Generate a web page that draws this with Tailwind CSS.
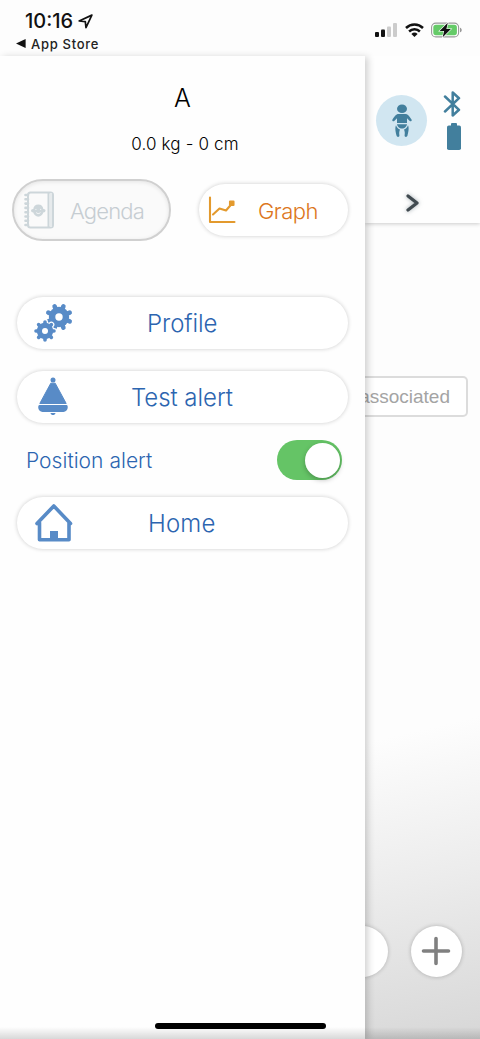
<!DOCTYPE html>
<html lang="en">
<head>
<meta charset="utf-8">
<meta name="viewport" content="width=device-width, initial-scale=1">
<title>Menu</title>
<script src="https://cdn.jsdelivr.net/npm/@tailwindcss/browser@4"></script>
</head>
<body class="bg-[#fdfdfd] font-['Inter','Liberation_Sans',sans-serif]">
<div class="relative flex h-[1039px] w-[480px] flex-col overflow-hidden bg-[#fdfdfd]">

  <!-- status bar -->
  <header class="flex h-14 shrink-0 justify-between">
    <div class="flex flex-col pl-4 pt-[9px]">
      <div class="flex h-6 items-center gap-[5px] pl-[9px]">
        <span class="text-[20px] leading-6 font-medium tracking-[0px] text-[#111]">10:16</span>
        <svg class="h-[15px] w-[15px]" viewBox="0 0 16 16" fill="none" stroke="#111" stroke-width="1.8" stroke-linejoin="round"><path d="M14.800 1.200 1.200 7.400l6.600.8.700 6.300z"/></svg>
      </div>
      <div class="flex h-5 items-center gap-[5px] pt-px">
        <svg class="h-[9px] w-[10px]" viewBox="0 0 10 9" fill="#111"><path d="M0 4.500 9.600 0v9z"/></svg>
        <span class="text-[13px] leading-5 font-medium tracking-[0.700px] text-[#222]">App Store</span>
      </div>
    </div>
    <div class="mt-[21px] flex h-[18px] items-center gap-[6px] pr-[18px]">
      <svg class="-ml-1 mr-[2px] h-[14px] w-[22px]" viewBox="0 0 22 14"><rect x="0" y="9" width="4" height="5" rx="1" fill="#111"/><rect x="6" y="6.500" width="4" height="7.500" rx="1" fill="#111"/><rect x="12" y="3.500" width="4" height="10.500" rx="1" fill="#ccc"/><rect x="18" y="0" width="4" height="14" rx="1" fill="#ccc"/></svg>
      <svg class="mr-[1px] h-[14px] w-[19px]" viewBox="0 0 19 14" fill="none" stroke="#111" stroke-width="2.500"><path d="M1 5a12.200 12.200 0 0 1 17 0M4.100 8.500a7.800 7.800 0 0 1 10.800 0"/><path d="M9.500 14 6.400 11a4.500 4.500 0 0 1 6.200 0z" fill="#111" stroke="none"/></svg>
      <svg class="h-4 w-[31px]" viewBox="0 0 31 16"><rect x=".6" y="1.100" width="27" height="13.800" rx="4.200" fill="#fff" stroke="#999" stroke-width="1.100"/><rect x="2.300" y="2.800" width="23.600" height="10.400" rx="2.600" fill="#65cb68"/><path d="M29 5.700c2.300.6 2.300 4 0 4.600z" fill="#999"/><path d="M16.800.7 8.600 9h4.500l-1.400 6.300L19.900 7h-4.500z" fill="#111" stroke="#fff" stroke-width="1.200" paint-order="stroke"/></svg>
    </div>
  </header>

  <div class="flex h-[983px]">
    <!-- side drawer -->
    <aside class="relative z-10 flex w-[365px] shrink-0 flex-col bg-[#fefefe] shadow-[3px_1px_7px_rgba(0,0,0,0.18)]">
      <h1 class="mt-[27px] text-center text-[25px] leading-[30px] font-light text-black">A</h1>
      <p class="mt-[21px] pl-[5px] text-center text-[17px] leading-5 font-light tracking-[0.150px] text-black">0.0 kg - 0 cm</p>

      <div class="mt-[25px] flex h-[62px] items-center pl-3">
        <button class="flex h-[62px] w-[159px] items-center rounded-full border-2 border-[#d0d0d0] bg-[#fafafa] pl-[10px] shadow-[inset_0_1px_4px_rgba(0,0,0,0.09)]">
          <svg class="h-[38px] w-[31px]" viewBox="0 0 31 38" fill="none" stroke="#cdd6da" stroke-width="2"><rect x="4" y="1.500" width="25" height="35" rx="2.500"/><path d="M24.500 2v34"/><path d="M27 2v34" stroke="#e6eaec"/><path d="M1.500 4H4M1.500 8.300H4M1.500 12.600H4M1.500 16.900H4M1.500 21.200H4M1.500 25.500H4M1.500 29.800H4M1.500 34H4" stroke-width="2.600" stroke-linecap="round"/><path d="M14.300 13.500c-3 0-4.800 2-5 4.500-3-.2-3 3.400 0 3.500.4 2 2.500 4.200 5 4.200s4.600-2.200 5-4.200c3-.1 3-3.700 0-3.500-.2-2.500-2-4.500-5-4.500z" fill="#cdd6da" stroke="none"/><path d="M11.400 18.400h1M16.200 18.400h1M12.200 21.600c1.300 1.300 2.900 1.300 4.200 0" stroke="#fafafa" stroke-width=".9"/></svg>
          <span class="ml-[15px] pt-px text-[22px] leading-7 font-light tracking-[-0.850px] text-[#c6cdd2]">Agenda</span>
        </button>
        <button class="ml-7 flex h-[52px] w-[149px] items-center rounded-full bg-white pl-[9px] shadow-[0_0_4px_rgba(0,0,0,0.2)]">
          <svg class="h-7 w-7" viewBox="0 0 28 28" fill="none" stroke="#e39a2e" stroke-width="2.100" stroke-linecap="round" stroke-linejoin="round"><path d="M2 1.500v24.500h24.500"/><path d="m5 18.500 6.500-6 6.500 2 6-7"/><path d="M22 5.500h3.500V9H22z" fill="#e39a2e"/></svg>
          <span class="ml-[22px] pt-px text-[22px] leading-7 font-light tracking-[-0.550px] text-[#dc7620]">Graph</span>
        </button>
      </div>

      <nav class="mt-14 flex flex-col px-[17px]">
        <button class="flex h-[52px] w-[331px] items-center rounded-full bg-white pl-4 shadow-[0_0_4px_rgba(0,0,0,0.2)]">
          <svg class="h-10 w-10 shrink-0" viewBox="0 0 40 40" fill="#588bc7" stroke="#588bc7" stroke-linecap="round">
            <circle cx="26" cy="14" r="10.200" stroke="none"/>
            <path d="M30.400 3.300 21.600 24.700M21.600 3.300 30.400 24.700M36.700 9.600 15.300 18.400M15.300 9.600 36.700 18.400" stroke-width="4.600"/>
            <circle cx="26" cy="14" r="3.700" fill="#fff" stroke="none"/>
            <g stroke="#fff" fill="#fff"><circle cx="12" cy="28" r="9.300" stroke="none"/><path d="M12 19v18M3 28h18M5.640 21.640l12.720 12.720M18.360 21.640 5.640 34.360" stroke-width="6"/></g>
            <circle cx="12" cy="28" r="8.200" stroke="none"/>
            <path d="M12 19v18M3 28h18M5.640 21.640l12.720 12.720M18.360 21.640 5.640 34.360" stroke-width="3.600"/>
            <circle cx="12" cy="28" r="3" fill="#fff" stroke="none"/>
          </svg>
          <span class="ml-[74px] pt-px text-[24px] leading-8 font-light tracking-[-0.080px] text-[#2c65b0]">Profile</span>
        </button>

        <button class="mt-[22px] flex h-[52px] w-[331px] items-center rounded-full bg-white pl-4 shadow-[0_0_4px_rgba(0,0,0,0.2)]">
          <svg class="h-10 w-10 shrink-0" viewBox="0 0 40 40" fill="#588bc7"><circle cx="20" cy="3" r="2.500"/><path d="M17.800 6.200h4.400l11 20.300H6.800z" stroke="#588bc7" stroke-linejoin="round"/><path d="M6.500 28.100h27c2.200 0 1.700 6.900-3 6.900h-21c-4.700 0-5.200-6.900-3-6.900zM17.500 36h5c-.5 2.700-4.500 2.700-5 0z"/></svg>
          <span class="ml-[58px] pt-px text-[24px] leading-8 font-light tracking-[-0.050px] text-[#2c65b0]">Test alert</span>
        </button>

        <div class="mt-4 flex h-[42px] items-center justify-between pl-[9px] pr-[6px]">
          <span class="pt-[2px] text-[21px] leading-7 font-light tracking-[0.030px] text-[#2c65b0]">Position alert</span>
          <span class="flex h-10 w-[65px] items-center justify-end rounded-full bg-[#65c466] pr-[2px]"><span class="h-[35px] w-[35px] rounded-full bg-white shadow-[0_2px_5px_rgba(0,0,0,0.25)]"></span></span>
        </div>

        <button class="mt-4 flex h-[52px] w-[331px] items-center rounded-full bg-white pl-4 shadow-[0_0_4px_rgba(0,0,0,0.2)]">
          <svg class="h-10 w-10 shrink-0" viewBox="0 0 40 40" fill="none" stroke="#588bc7" stroke-width="3.600" stroke-linecap="round" stroke-linejoin="round"><path d="M4 20.500 20.800 3 37.500 20.500M6.500 19.500v17.300h29.500V19.500"/><path d="M17 28h8v9h-8z" fill="#588bc7" stroke="none"/></svg>
          <span class="ml-[75px] pt-[2px] text-[24px] leading-8 font-light tracking-[0.150px] text-[#2c65b0]">Home</span>
        </button>
      </nav>

      <div class="mt-auto mb-[10px] ml-[155px] h-[6px] w-[171px] rounded-full bg-black"></div>
    </aside>

    <!-- page behind the drawer -->
    <main class="flex w-[115px] flex-col overflow-hidden bg-[linear-gradient(167deg,#fdfdfd_0%,#fdfdfd_68%,#ececec_83%,#d7d7d7_100%)]">
      <div class="flex h-[167px] shrink-0 flex-col bg-[#fefefe] shadow-[0_1px_4px_rgba(0,0,0,0.2)]">
        <div class="mt-[35px] flex h-[60px] items-start">
          <div class="ml-[11px] mt-1 flex h-[51px] w-[51px] items-center justify-center rounded-full bg-[#d1e6f1]">
            <svg class="h-[34px] w-5" viewBox="0 0 20 34" fill="#427f9d"><ellipse cx="10" cy="4.700" rx="5" ry="4.300"/><path d="M6.500 10h7c2 0 3.500 1.500 6 5.500.8 1.400-.9 2.400-2 1.200l-2.500-2.500V19H5v-4.800l-2.500 2.500C1.400 17.900-.3 16.900.5 15.500 3 11.500 4.500 10 6.500 10z"/><path d="M5 20.200h10c-.3 2-2.300 4.300-5 4.300s-4.700-2.300-5-4.300z"/><path d="M4 21.200c.7 2.200 2.300 3.700 4 4.300-.8 2-1 3.500-.6 5.800.3 2-2.500 2.200-2.900.3C4 29 2.500 24.500 4 21.200zM16 21.200c-.7 2.200-2.300 3.700-4 4.300.8 2 1 3.500.6 5.800-.3 2 2.500 2.200 2.900.3.500-2.600 2-7.100.5-10.400z"/></svg>
          </div>
          <div class="ml-[16px] flex flex-col items-center gap-[6px]">
            <svg class="h-[26px] w-[18px]" viewBox="0 0 18 26" fill="none" stroke="#427f9d" stroke-width="2.500" stroke-linecap="round" stroke-linejoin="round"><path d="m2 5.500 14 13.300-6.300 5.700V1.500L16 7.200 2 20.500"/></svg>
            <svg class="ml-[3px] h-[27px] w-[14px]" viewBox="0 0 14 27" fill="#427f9d"><rect y="2.500" width="14" height="24.500" rx="1.800"/><rect x="4" width="6" height="4" rx="1"/></svg>
          </div>
        </div>
        <svg class="ml-[40px] mt-[42px] h-5 w-[15px] drop-shadow-[0_0_2px_rgba(70,90,100,0.5)]" viewBox="0 0 15 20" fill="none" stroke="#414a50" stroke-width="3.200" stroke-linecap="round" stroke-linejoin="round"><path d="m3 3 9 7-9 7"/></svg>
      </div>
      <div class="mt-[153px] flex h-[41px] w-[103px] shrink-0 items-center justify-end rounded-r-[5px] border-2 border-l-0 border-[#dcdcdc] bg-white pr-[16px]">
        <span class="font-['Liberation_Sans',sans-serif] text-[19px] leading-6 tracking-[0px] text-[#a4a4a4]">associated</span>
      </div>
      <div class="mt-auto mb-[62px] flex h-[51px] shrink-0">
        <div class="-ml-[28px] h-[51px] w-[51px] shrink-0 rounded-full bg-white shadow-[0_0_4px_rgba(0,0,0,0.22)]"></div>
        <div class="ml-[23px] flex h-[51px] w-[51px] shrink-0 items-center justify-center rounded-full bg-white shadow-[0_0_4px_rgba(0,0,0,0.24)]">
          <svg class="mr-[2px] mb-px h-[30px] w-[30px]" viewBox="0 0 30 30" stroke="#808080" stroke-width="3.600" stroke-linecap="round"><path d="M15 2.500v25M2.500 15h25"/></svg>
        </div>
      </div>
    </main>
  </div>
  <!-- soft edge below the content -->
  <div class="absolute bottom-0 left-0 z-20 h-3 w-full bg-linear-to-b from-black/0 to-black/15"></div>
</div>
</body>
</html>
